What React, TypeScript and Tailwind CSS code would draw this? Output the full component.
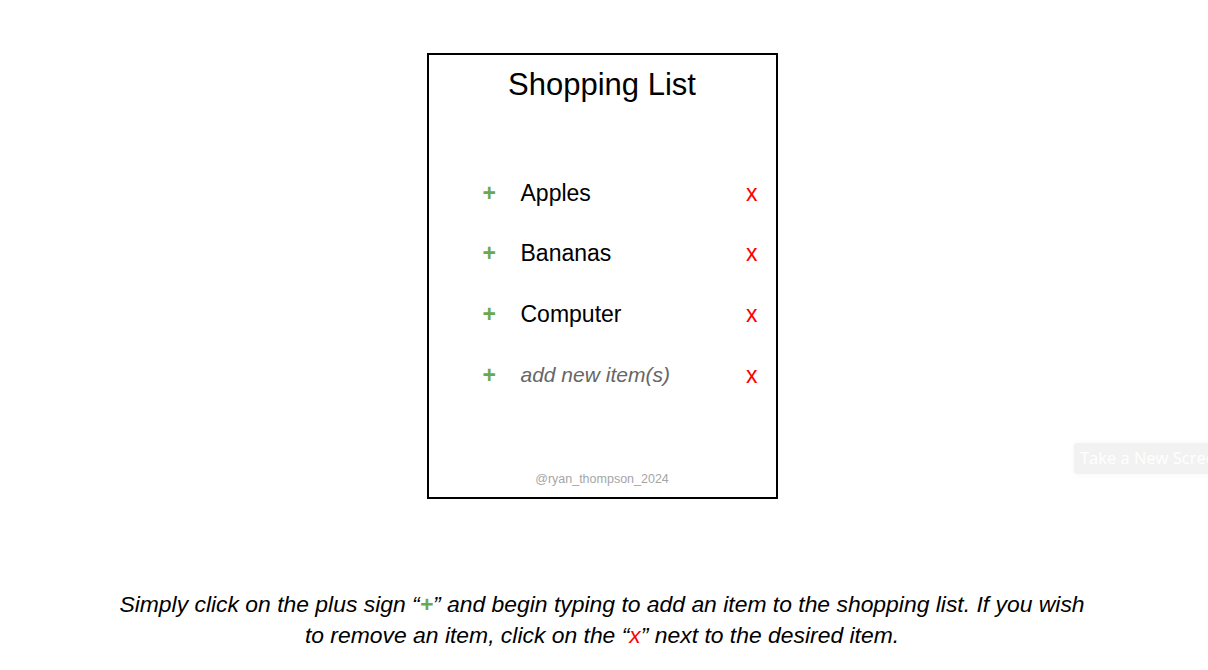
import { useState } from 'react';

const initialItems = ['Apples', 'Bananas', 'Computer'];

export default function App() {
  const [items, setItems] = useState<string[]>(initialItems);

  return (
    <div className="relative w-full h-[670px] overflow-hidden bg-white font-['Liberation_Sans',Arial,sans-serif]">
      {/* Card */}
      <div className="flex justify-center pt-[53px] pr-[4px]">
        <div className="w-[351px] h-[446px] border-2 border-black flex flex-col">
          <h1 className="pt-[7px] text-center text-[31px] text-black">Shopping List</h1>

          <ul className="mt-[54px] flex flex-col">
            {items.map((item, i) => (
              <li key={item} className="h-[60.5px] flex items-center pl-[54px] pr-[18px] text-[23px]">
                <button className="w-[38px] text-left font-bold text-[#6aa84f]">+</button>
                <span className="flex-1 text-black">{item}</span>
                <button
                  onClick={() => setItems(items.filter((_, j) => j !== i))}
                  className="text-[#ff0000]"
                >
                  x
                </button>
              </li>
            ))}
            <li className="h-[60.5px] mt-[0.5px] flex items-center pl-[54px] pr-[18px] text-[23px]">
              <button className="w-[38px] text-left font-bold text-[#6aa84f]">+</button>
              <span className="flex-1 italic text-[21px] text-[#666666]">add new item(s)</span>
              <button className="text-[#ff0000]">x</button>
            </li>
          </ul>

          <p className="mt-auto pb-[8px] text-center text-[12.5px] text-[#a6a6a6]">@ryan_thompson_2024</p>
        </div>
      </div>

      {/* Instructions */}
      <p className="mt-[90px] pr-[4px] text-center italic text-[22.9px] leading-[31px] text-black">
        Simply click on the plus sign “<span className="font-bold text-[#6aa84f]">+</span>” and begin typing to add an item to the shopping list. If you wish
        <br />
        to remove an item, click on the “<span className="text-[#ff0000]">x</span>” next to the desired item.
      </p>

      {/* Floating screenshot button */}
      <button className="absolute left-[1074px] top-[443px] h-[31px] pl-[6px] pr-3 rounded-[3px] bg-[#f2f2f2] text-white text-[16.5px] whitespace-nowrap font-['Open_Sans',sans-serif] shadow-[0_0_6px_rgba(0,0,0,0.04)]">
        Take a New Screenshot
      </button>
    </div>
  );
}
